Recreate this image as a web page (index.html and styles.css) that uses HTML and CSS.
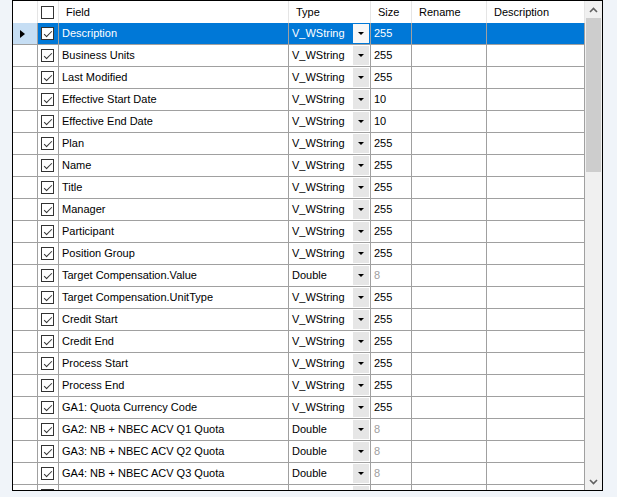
FILE: index.html
```html
<!DOCTYPE html>
<html>
<head>
<meta charset="utf-8">
<link rel="stylesheet" href="styles.css">
</head>
<body>
<div class="frame">
  <div class="table">
    <div class="row hdr">
      <div class="c rh"></div>
      <div class="c ck"><span class="cb"></span></div>
      <div class="c h">Field</div>
      <div class="c h">Type</div>
      <div class="c h">Size</div>
      <div class="c h">Rename</div>
      <div class="c h last">Description</div>
    </div>
    <div class="row sel">
      <div class="c rh"><span class="arrow"></span></div>
      <div class="c ck"><span class="cb on"></span></div>
      <div class="c fd">Description</div>
      <div class="c ty"><span class="tv">V_WString</span><span class="dd"></span></div>
      <div class="c sz">255</div>
      <div class="c"></div>
      <div class="c last"></div>
    </div>
    <div class="row"><div class="c rh"></div><div class="c ck"><span class="cb on"></span></div><div class="c fd">Business Units</div><div class="c ty"><span class="tv">V_WString</span><span class="dd"></span></div><div class="c sz">255</div><div class="c"></div><div class="c last"></div></div>
    <div class="row"><div class="c rh"></div><div class="c ck"><span class="cb on"></span></div><div class="c fd">Last Modified</div><div class="c ty"><span class="tv">V_WString</span><span class="dd"></span></div><div class="c sz">255</div><div class="c"></div><div class="c last"></div></div>
    <div class="row"><div class="c rh"></div><div class="c ck"><span class="cb on"></span></div><div class="c fd">Effective Start Date</div><div class="c ty"><span class="tv">V_WString</span><span class="dd"></span></div><div class="c sz">10</div><div class="c"></div><div class="c last"></div></div>
    <div class="row"><div class="c rh"></div><div class="c ck"><span class="cb on"></span></div><div class="c fd">Effective End Date</div><div class="c ty"><span class="tv">V_WString</span><span class="dd"></span></div><div class="c sz">10</div><div class="c"></div><div class="c last"></div></div>
    <div class="row"><div class="c rh"></div><div class="c ck"><span class="cb on"></span></div><div class="c fd">Plan</div><div class="c ty"><span class="tv">V_WString</span><span class="dd"></span></div><div class="c sz">255</div><div class="c"></div><div class="c last"></div></div>
    <div class="row"><div class="c rh"></div><div class="c ck"><span class="cb on"></span></div><div class="c fd">Name</div><div class="c ty"><span class="tv">V_WString</span><span class="dd"></span></div><div class="c sz">255</div><div class="c"></div><div class="c last"></div></div>
    <div class="row"><div class="c rh"></div><div class="c ck"><span class="cb on"></span></div><div class="c fd">Title</div><div class="c ty"><span class="tv">V_WString</span><span class="dd"></span></div><div class="c sz">255</div><div class="c"></div><div class="c last"></div></div>
    <div class="row"><div class="c rh"></div><div class="c ck"><span class="cb on"></span></div><div class="c fd">Manager</div><div class="c ty"><span class="tv">V_WString</span><span class="dd"></span></div><div class="c sz">255</div><div class="c"></div><div class="c last"></div></div>
    <div class="row"><div class="c rh"></div><div class="c ck"><span class="cb on"></span></div><div class="c fd">Participant</div><div class="c ty"><span class="tv">V_WString</span><span class="dd"></span></div><div class="c sz">255</div><div class="c"></div><div class="c last"></div></div>
    <div class="row"><div class="c rh"></div><div class="c ck"><span class="cb on"></span></div><div class="c fd">Position Group</div><div class="c ty"><span class="tv">V_WString</span><span class="dd"></span></div><div class="c sz">255</div><div class="c"></div><div class="c last"></div></div>
    <div class="row"><div class="c rh"></div><div class="c ck"><span class="cb on"></span></div><div class="c fd">Target Compensation.Value</div><div class="c ty"><span class="tv">Double</span><span class="dd"></span></div><div class="c sz dis">8</div><div class="c"></div><div class="c last"></div></div>
    <div class="row"><div class="c rh"></div><div class="c ck"><span class="cb on"></span></div><div class="c fd">Target Compensation.UnitType</div><div class="c ty"><span class="tv">V_WString</span><span class="dd"></span></div><div class="c sz">255</div><div class="c"></div><div class="c last"></div></div>
    <div class="row"><div class="c rh"></div><div class="c ck"><span class="cb on"></span></div><div class="c fd">Credit Start</div><div class="c ty"><span class="tv">V_WString</span><span class="dd"></span></div><div class="c sz">255</div><div class="c"></div><div class="c last"></div></div>
    <div class="row"><div class="c rh"></div><div class="c ck"><span class="cb on"></span></div><div class="c fd">Credit End</div><div class="c ty"><span class="tv">V_WString</span><span class="dd"></span></div><div class="c sz">255</div><div class="c"></div><div class="c last"></div></div>
    <div class="row"><div class="c rh"></div><div class="c ck"><span class="cb on"></span></div><div class="c fd">Process Start</div><div class="c ty"><span class="tv">V_WString</span><span class="dd"></span></div><div class="c sz">255</div><div class="c"></div><div class="c last"></div></div>
    <div class="row"><div class="c rh"></div><div class="c ck"><span class="cb on"></span></div><div class="c fd">Process End</div><div class="c ty"><span class="tv">V_WString</span><span class="dd"></span></div><div class="c sz">255</div><div class="c"></div><div class="c last"></div></div>
    <div class="row"><div class="c rh"></div><div class="c ck"><span class="cb on"></span></div><div class="c fd">GA1: Quota Currency Code</div><div class="c ty"><span class="tv">V_WString</span><span class="dd"></span></div><div class="c sz">255</div><div class="c"></div><div class="c last"></div></div>
    <div class="row"><div class="c rh"></div><div class="c ck"><span class="cb on"></span></div><div class="c fd">GA2: NB + NBEC ACV Q1 Quota</div><div class="c ty"><span class="tv">Double</span><span class="dd"></span></div><div class="c sz dis">8</div><div class="c"></div><div class="c last"></div></div>
    <div class="row"><div class="c rh"></div><div class="c ck"><span class="cb on"></span></div><div class="c fd">GA3: NB + NBEC ACV Q2 Quota</div><div class="c ty"><span class="tv">Double</span><span class="dd"></span></div><div class="c sz dis">8</div><div class="c"></div><div class="c last"></div></div>
    <div class="row"><div class="c rh"></div><div class="c ck"><span class="cb on"></span></div><div class="c fd">GA4: NB + NBEC ACV Q3 Quota</div><div class="c ty"><span class="tv">Double</span><span class="dd"></span></div><div class="c sz dis">8</div><div class="c"></div><div class="c last"></div></div>
    <div class="row"><div class="c rh"></div><div class="c ck"><span class="cb on"></span></div><div class="c fd"></div><div class="c ty"><span class="tv"></span><span class="dd"></span></div><div class="c sz dis"></div><div class="c"></div><div class="c last"></div></div>
  </div>
  <div class="scroll">
    <div class="sbtn">
      <svg width="9" height="6" viewBox="0 0 9 6"><polyline points="1,5 4.5,1.5 8,5" fill="none" stroke="#606060" stroke-width="1.6"/></svg>
    </div>
    <div class="track">
      <div class="thumb"></div>
    </div>
    <div class="sbtn">
      <svg width="9" height="6" viewBox="0 0 9 6"><polyline points="1,1 4.5,4.5 8,1" fill="none" stroke="#606060" stroke-width="1.6"/></svg>
    </div>
  </div>
</div>
</body>
</html>
```
FILE: styles.css
```css
* { box-sizing: border-box; }
html, body { margin: 0; padding: 0; }
body {
  background: #f0f4f9;
  width: 617px;
  height: 497px;
  overflow: hidden;
  font-family: "Liberation Sans", Arial, sans-serif;
  font-size: 11px;
  color: #000;
}
.frame {
  margin-left: 12px;
  width: 591px;
  height: 491px;
  border: 1px solid #000;
  background: #fff;
  display: flex;
}
.table {
  width: 572px;
  height: 489px;
  overflow: hidden;
  flex: none;
}
.row {
  display: grid;
  grid-template-columns: 25px 21px 230px 82px 41px 75px 98px;
  height: 22px;
}
.c {
  border-right: 1px solid #a0a0a0;
  border-bottom: 1px solid #a0a0a0;
  line-height: 21px;
  padding-left: 3px;
  white-space: nowrap;
  overflow: hidden;
  position: relative;
}
.hdr { height: 22px; }
.hdr .c {
  border-bottom: none;
  border-right: 1px solid #e5e5e5;
  line-height: 22px;
}
.hdr .h { padding-left: 7px; }
.rh { padding-left: 7px; display: flex; align-items: center; }
.ck { padding-left: 3px; display: flex; align-items: center; }
.hdr .ck { align-items: flex-start; padding-top: 5px; }
.cb {
  display: block;
  width: 13px;
  height: 13px;
  border: 1px solid #333;
  background: #fff;
  position: relative;
}
.cb.on::after {
  content: "";
  position: absolute;
  left: 3.5px;
  top: 0.5px;
  width: 3px;
  height: 7px;
  border-right: 1.3px solid #333;
  border-bottom: 1.3px solid #333;
  transform: rotate(45deg);
}
.arrow {
  display: block;
  width: 0;
  height: 0;
  border-left: 5px solid #000;
  border-top: 4.5px solid transparent;
  border-bottom: 4.5px solid transparent;
}
.ty { display: flex; align-items: center; padding-right: 1px; }
.tv { flex: 1; }
.dd {
  flex: none;
  width: 16px;
  height: 19px;
  background: #e6e6e6;
  display: flex;
  align-items: center;
  justify-content: center;
}
.dd::after {
  content: "";
  display: block;
  width: 0;
  height: 0;
  border-left: 3px solid transparent;
  border-right: 3px solid transparent;
  border-top: 3px solid #000;
}
.sz.dis { color: #a0a0a0; }
.sel .c { background: #0078d7; color: #fff; }
.sel .rh { background: #c6def4; }
.sel .dd { background: #f7f7f7; }
.scroll {
  width: 17px;
  height: 489px;
  background: #f0f0f0;
  display: flex;
  flex-direction: column;
}
.sbtn {
  height: 17px;
  flex: none;
  display: flex;
  align-items: center;
  justify-content: center;
}
.track { flex: 1; padding: 0 1px; }
.thumb {
  height: 154px;
  background: #cdcdcd;
}
```
